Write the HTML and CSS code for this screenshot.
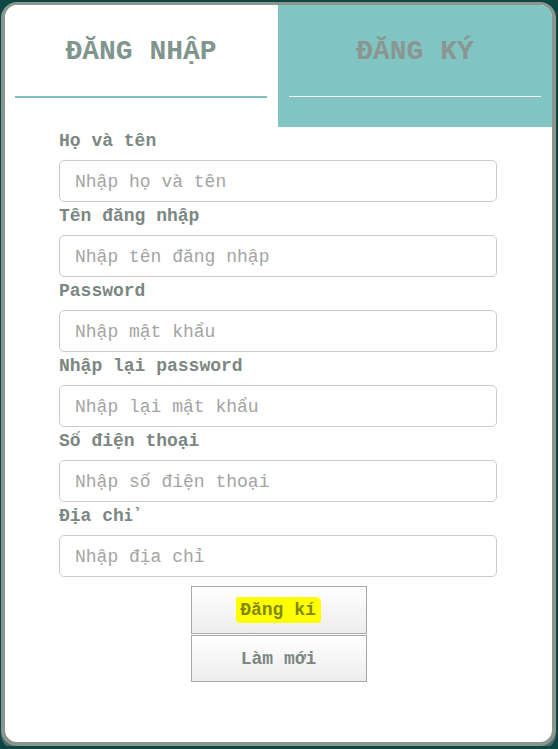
FILE: index.html
```html
<!DOCTYPE html>
<html lang="vi">
<head>
<meta charset="utf-8">
<title>Đăng ký</title>
<link rel="stylesheet" href="styles.css">
</head>
<body>
<div class="modal">
  <div class="tabs">
    <div class="tab tab-login">
      <div class="tab-title">ĐĂNG NHẬP</div>
      <div class="tab-line"></div>
    </div>
    <div class="tab tab-register">
      <div class="tab-title">ĐĂNG KÝ</div>
      <div class="tab-line"></div>
    </div>
  </div>
  <form class="form">
    <label class="label">Họ và tên</label>
    <input class="input" type="text" placeholder="Nhập họ và tên">
    <label class="label">Tên đăng nhập</label>
    <input class="input" type="text" placeholder="Nhập tên đăng nhập">
    <label class="label">Password</label>
    <input class="input" type="password" placeholder="Nhập mật khẩu">
    <label class="label">Nhập lại password</label>
    <input class="input" type="password" placeholder="Nhập lại mật khẩu">
    <label class="label">Số điện thoại</label>
    <input class="input" type="text" placeholder="Nhập số điện thoại">
    <label class="label">Địa ch<span class="alt-glyph">ỉ</span></label>
    <input class="input" type="text" placeholder="Nhập địa chỉ">
    <div class="buttons">
      <button class="btn" type="button"><span class="mark">Đăng kí</span></button>
      <button class="btn btn-reset" type="button">Làm mới</button>
    </div>
  </form>
</div>
</body>
</html>
```
FILE: styles.css
```css
html {
  background: #0c4743;
}
body {
  margin: 0;
  padding: 2px 0 0 1px;
  font-family: "Liberation Mono", "Courier New", monospace;
}
.modal {
  width: 547px;
  height: 737px;
  border: 4px solid #8a968e;
  border-top-width: 3px;
  border-radius: 16px;
  background: #ffffff;
  overflow: hidden;
  box-shadow: 0 4px 0 0 #4f6c68;
}
.tabs {
  display: flex;
  height: 122px;
}
.tab {
  padding-top: 31px;
  box-sizing: border-box;
}
.tab-login {
  width: 273px;
  background: #ffffff;
  padding-left: 10px;
  padding-right: 11px;
}
.tab-register {
  width: 274px;
  background: #80c4c3;
  padding-left: 11px;
  padding-right: 11px;
}
.tab-title {
  font-weight: bold;
  font-size: 28px;
  line-height: 32px;
  text-align: center;
}
.tab-login .tab-title {
  color: #7f968e;
}
.tab-register .tab-title {
  color: #8c9690;
}
.tab-line {
  margin-top: 28px;
  height: 2px;
}
.tab-login .tab-line {
  background: #7fbfbe;
}
.tab-register .tab-line {
  height: 1px;
  background: #f4f4f4;
}
.form {
  display: flex;
  flex-direction: column;
  align-items: flex-start;
  padding-left: 54px;
}
.label {
  margin-top: 4px;
  margin-bottom: 9px;
  font-weight: bold;
  font-size: 18px;
  line-height: 20px;
  color: #7b8782;
}
.alt-glyph {
  font-family: "DejaVu Sans Mono", monospace;
  font-size: 15px;
}
.input {
  box-sizing: border-box;
  width: 438px;
  height: 42px;
  margin: 0;
  border: 1px solid #cccccc;
  border-radius: 5px;
  padding: 2px 15px 0;
  font-family: "Liberation Mono", "Courier New", monospace;
  font-size: 18px;
  color: #555555;
  background: #ffffff;
  outline: none;
}
.input::placeholder {
  color: #a4a4a4;
}
.buttons {
  align-self: stretch;
  margin-left: -54px;
  margin-top: 9px;
  display: flex;
  flex-direction: column;
  align-items: center;
}
.btn {
  box-sizing: border-box;
  width: 176px;
  height: 48px;
  margin: 0;
  border: 1px solid #a8a8a8;
  background: linear-gradient(#ffffff, #ededed);
  font-family: "Liberation Mono", "Courier New", monospace;
  font-weight: bold;
  font-size: 18px;
  color: #7b8782;
  padding: 0;
}
.btn-reset {
  margin-top: 1px;
  height: 47px;
}
.mark {
  background: #ffff00;
  color: #7f8900;
  padding: 3px 5px 3px 4px;
  border-radius: 2px 5px 3px 4px;
}
```
